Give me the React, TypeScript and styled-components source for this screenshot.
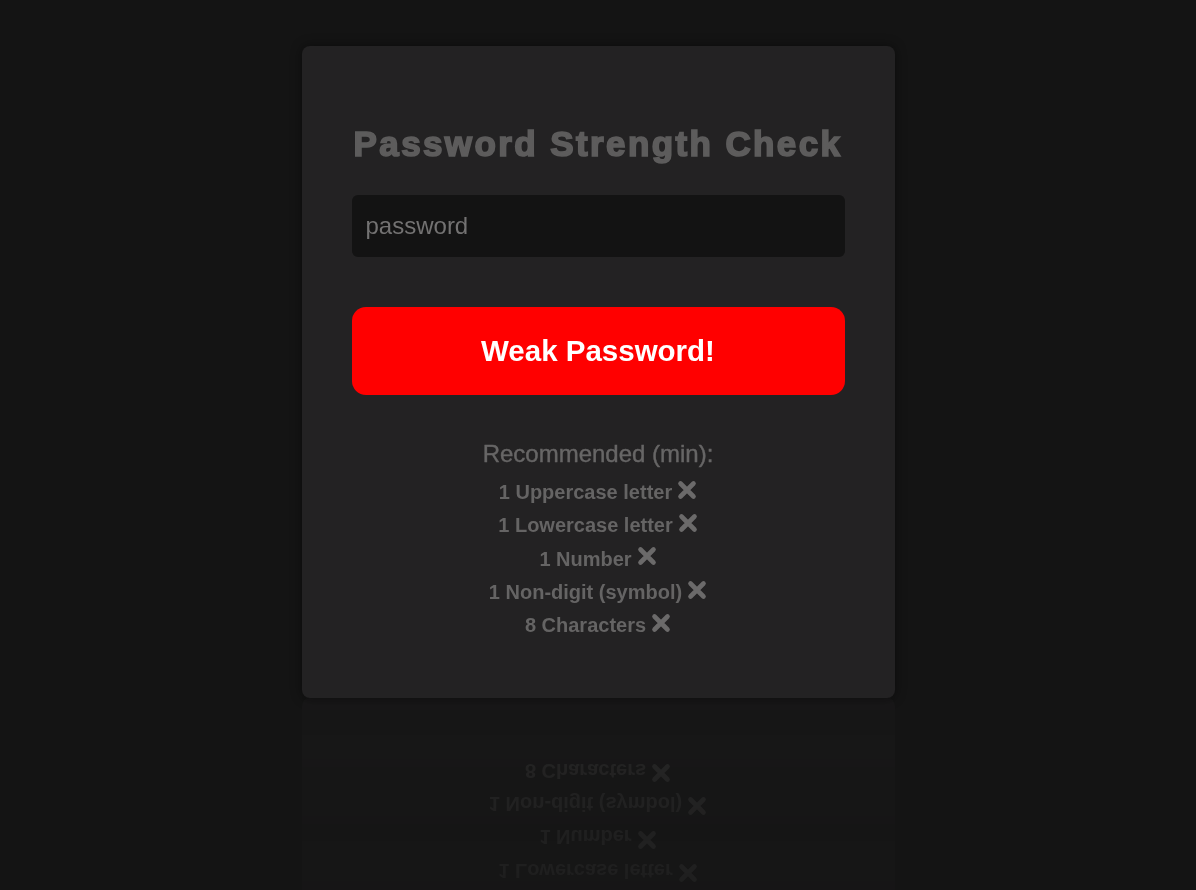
import React from "react";
import styled, { createGlobalStyle } from "styled-components";

const GlobalStyle = createGlobalStyle`
  html, body {
    margin: 0;
    padding: 0;
    background: #141414;
    font-family: "Liberation Sans", Arial, sans-serif;
  }
  * { box-sizing: border-box; }
`;

const Page = styled.div`
  display: flex;
  justify-content: center;
  align-items: flex-start;
  padding-top: 46px;
  overflow: hidden;
  height: 890px;
`;

const Card = styled.div`
  width: 593px;
  background: #232223;
  border-radius: 8px;
  padding: 78px 50px 56px;
  display: flex;
  flex-direction: column;
  align-items: stretch;
  box-shadow: 0 0 12px rgba(0, 0, 0, 0.45);
  -webkit-box-reflect: below 0px
    linear-gradient(transparent, transparent 30%, rgba(255, 255, 255, 0.22));
`;

const Title = styled.h1`
  margin: 0;
  font-size: 35px;
  line-height: 39px;
  font-weight: 700;
  letter-spacing: 2.4px;
  color: #5d5c5c;
  -webkit-text-stroke: 1.7px #5d5c5c;
  text-align: center;
  white-space: nowrap;
`;

const PasswordInput = styled.input`
  margin-top: 32px;
  height: 62px;
  width: 100%;
  border: none;
  outline: none;
  border-radius: 6px;
  background: #131313;
  padding: 0 14px;
  font-family: "Liberation Sans", Arial, sans-serif;
  font-size: 24px;
  color: #8a8a8a;
  &::placeholder {
    color: #737272;
  }
`;

const StatusButton = styled.button<{ $tone: string }>`
  margin-top: 50px;
  height: 88px;
  width: 100%;
  border: none;
  border-radius: 14px;
  background: ${(p) => p.$tone};
  color: #ffffff;
  font-family: "Liberation Sans", Arial, sans-serif;
  font-size: 29.5px;
  font-weight: 700;
  cursor: pointer;
`;

const Recommended = styled.div`
  margin-top: 45px;
  text-align: center;
  font-size: 24px;
  line-height: 28px;
  color: #676666;
  -webkit-text-stroke: 0.4px #676666;
`;

const List = styled.ul`
  list-style: none;
  margin: 8px 0 0;
  padding: 0;
  display: flex;
  flex-direction: column;
  align-items: center;
`;

const Item = styled.li`
  display: flex;
  align-items: center;
  gap: 5px;
  height: 33.3px;
  font-size: 20px;
  font-weight: 700;
  color: #656464;
`;

const CrossIcon = styled.svg`
  width: 20px;
  height: 20px;
  margin-top: -6px;
  flex: none;
`;

const Cross = () => (
  <CrossIcon viewBox="0 0 20 20">
    <path
      d="M3.5 3.5 L16.5 16.5 M16.5 3.5 L3.5 16.5"
      stroke="#6b6a6a"
      strokeWidth="4.6"
      strokeLinecap="round"
      fill="none"
    />
  </CrossIcon>
);

const rules = [
  "1 Uppercase letter",
  "1 Lowercase letter",
  "1 Number",
  "1 Non-digit (symbol)",
  "8 Characters",
];

export default function App() {
  return (
    <>
      <GlobalStyle />
      <Page>
        <Card>
          <Title>Password Strength Check</Title>
          <PasswordInput type="text" placeholder="password" />
          <StatusButton $tone="#ff0000">Weak Password!</StatusButton>
          <Recommended>Recommended (min):</Recommended>
          <List>
            {rules.map((r) => (
              <Item key={r}>
                {r}
                <Cross />
              </Item>
            ))}
          </List>
        </Card>
      </Page>
    </>
  );
}
